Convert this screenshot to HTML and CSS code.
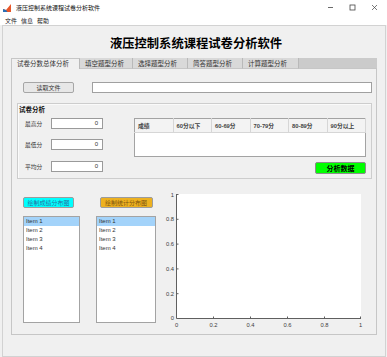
FILE: index.html
```html
<!DOCTYPE html>
<html lang="zh-CN">
<head>
    <meta charset="UTF-8">
    <title>液压控制系统课程试卷分析软件</title>
    <link rel="stylesheet" href="styles.css">
</head>
<body>
<div class="window">
    <div class="titlebar">
        <svg class="app-icon" viewBox="0 0 8 8">
            <rect width="8" height="8" fill="#fff"/>
            <path d="M0 8 L0 5 L3 6 L8 0 L8 8Z" fill="#e8572a"/>
            <path d="M0 8 L0 5 L3 6 L4.5 8Z" fill="#2a6fb5"/>
        </svg>
        <span class="title-text">液压控制系统课程试卷分析软件</span>
        <div class="controls">
            <span class="ctl"><svg viewBox="0 0 7 7"><path d="M1 3.5 H6" stroke="#444" stroke-width="0.8"/></svg></span>
            <span class="ctl"><svg viewBox="0 0 7 7"><rect x="1" y="1" width="5" height="5" fill="none" stroke="#444" stroke-width="0.8"/></svg></span>
            <span class="ctl"><svg viewBox="0 0 7 7"><path d="M1 1 L6 6 M6 1 L1 6" stroke="#444" stroke-width="0.7"/></svg></span>
        </div>
    </div>
    <div class="menubar">
        <span>文件</span><span>信息</span><span>帮助</span>
    </div>
    <div class="client">
        <h1 class="heading">液压控制系统课程试卷分析软件</h1>
        <div class="tabgroup">
            <div class="tabs">
                <div class="tab active">试卷分数总体分析</div>
                <div class="tab">填空题型分析</div>
                <div class="tab">选择题型分析</div>
                <div class="tab">简答题型分析</div>
                <div class="tab">计算题型分析</div>
                <div class="tab-fill"></div>
            </div>
            <div class="tabpanel">
                <div class="file-row">
                    <button class="btn btn-read">读取文件</button>
                    <div class="path-field"></div>
                </div>

                <div class="group">
                    <div class="group-title">试卷分析</div>
                    <div class="group-body">
                        <div class="stats">
                            <div class="stat"><span class="stat-label">最高分</span><div class="num-field">0</div></div>
                            <div class="stat"><span class="stat-label">最低分</span><div class="num-field">0</div></div>
                            <div class="stat"><span class="stat-label">平均分</span><div class="num-field">0</div></div>
                        </div>
                        <div class="result">
                            <table class="score-table">
                                <thead>
                                    <tr><th>成绩</th><th>60分以下</th><th>60-69分</th><th>70-79分</th><th>80-89分</th><th>90分以上</th></tr>
                                </thead>
                                <tbody>
                                    <tr><td colspan="6"></td></tr>
                                </tbody>
                            </table>
                            <button class="btn btn-analyze">分析数据</button>
                        </div>
                    </div>
                </div>

                <div class="plots">
                    <div class="plot-col col-score">
                        <button class="btn btn-cyan">绘制成绩分布图</button>
                        <ul class="listbox">
                            <li class="selected">Item 1</li>
                            <li>Item 2</li>
                            <li>Item 3</li>
                            <li>Item 4</li>
                        </ul>
                    </div>
                    <div class="plot-col col-stat">
                        <button class="btn btn-orange">绘制统计分布图</button>
                        <ul class="listbox">
                            <li class="selected">Item 1</li>
                            <li>Item 2</li>
                            <li>Item 3</li>
                            <li>Item 4</li>
                        </ul>
                    </div>
                    <svg class="axes" viewBox="0 0 212 142">
                        <rect x="16" y="5" width="185" height="124" fill="#fff"/>
                        <g stroke="#5f5f5f" stroke-width="1" fill="none">
                            <path d="M16.5 5 V129.5 H201"/>
                            <path d="M16.5 104.7 h2 M16.5 79.9 h2 M16.5 55.1 h2 M16.5 30.3 h2 M16.5 5.5 h2"/>
                            <path d="M53.5 129.5 v-2 M90.5 129.5 v-2 M127.5 129.5 v-2 M164.5 129.5 v-2 M200.5 129.5 v-2"/>
                        </g>
                        <g class="tick-y" text-anchor="end">
                            <text x="14" y="131">0</text>
                            <text x="14" y="106.5">0.2</text>
                            <text x="14" y="81.5">0.4</text>
                            <text x="14" y="57">0.6</text>
                            <text x="14" y="32">0.8</text>
                            <text x="14" y="7.5">1</text>
                        </g>
                        <g class="tick-x" text-anchor="middle">
                            <text x="16.5" y="138">0</text>
                            <text x="53.5" y="138">0.2</text>
                            <text x="90.5" y="138">0.4</text>
                            <text x="127.5" y="138">0.6</text>
                            <text x="164.5" y="138">0.8</text>
                            <text x="200.5" y="138">1</text>
                        </g>
                    </svg>
                </div>
            </div>
        </div>
    </div>
</div>
</body>
</html>
```

FILE: styles.css
```css
*{
    margin: 0;
    padding: 0;
    box-sizing: border-box;
}
body{
    width: 387px;
    height: 357px;
    overflow: hidden;
    background: #f0f0f0;
    font-family: "Liberation Sans", "Noto Sans CJK SC", sans-serif;
    color: #222;
}
.window{
    display: flex;
    flex-direction: column;
    height: 357px;
}

/* title bar + menu */
.titlebar{
    height: 15px;
    background: #fff;
    display: flex;
    align-items: center;
    padding-left: 3px;
}
.app-icon{
    width: 8px;
    height: 8px;
}
.title-text{
    margin-left: 5px;
    font-size: 6px;
    font-family: "Noto Sans CJK SC", sans-serif;
    color: #111;
}
.controls{
    margin-left: auto;
    margin-right: 2px;
    display: flex;
}
.ctl{
    width: 22px;
    height: 15px;
    display: flex;
    align-items: center;
    justify-content: center;
}
.ctl svg{
    width: 7px;
    height: 7px;
}
.menubar{
    height: 10px;
    background: #fff;
    display: flex;
    align-items: center;
    gap: 4px;
    padding-left: 5px;
    font-size: 6px;
    font-family: "Noto Sans CJK SC", sans-serif;
    color: #222;
}

/* client area */
.client{
    flex: 1;
    margin: 0 1px 0 2px;
    border: 1px solid #d2d2d2;
    background: #f0f0f0;
}
.heading{
    margin-top: 9px;
    padding-left: 4px;
    text-align: center;
    font-family: "Noto Sans CJK SC", sans-serif;
    font-size: 12.3px;
    font-weight: bold;
    line-height: 16px;
    color: #000;
}

/* tabs */
.tabgroup{
    margin: 7px 0 0 8px;
    width: 366px;
    height: 277px;
    display: flex;
    flex-direction: column;
}
.tabs{
    height: 11px;
    display: flex;
}
.tab{
    height: 11px;
    line-height: 10px;
    padding-left: 5px;
    font-size: 6.5px;
    font-family: "Noto Sans CJK SC", sans-serif;
    color: #333;
    background: #d9d9d9;
    border-right: 1px solid #b9b9b9;
    border-bottom: 1px solid #c6c6c6;
    white-space: nowrap;
}
.tab:nth-child(1){ width: 69px; }
.tab:nth-child(2){ width: 53px; }
.tab:nth-child(3){ width: 55px; }
.tab:nth-child(4){ width: 55px; }
.tab:nth-child(5){ width: 56px; }
.tab.active{
    background: #f0f0f0;
    border-left: 1px solid #c6c6c6;
    border-top: 1px solid #c6c6c6;
    border-bottom: none;
    line-height: 9px;
}
.tab-fill{
    flex: 1;
    background: #cbcbcb;
    border-bottom: 1px solid #c6c6c6;
}
.tabpanel{
    flex: 1;
    border: 1px solid #c6c6c6;
    border-top: none;
    background: #f0f0f0;
}

/* file row */
.file-row{
    display: flex;
    margin: 13px 0 0 11px;
}
.btn{
    font-family: "Noto Sans CJK SC", sans-serif;
    border: 1px solid #a6a6a6;
    border-radius: 2px;
    display: flex;
    align-items: center;
    justify-content: center;
}
.btn-read{
    width: 51px;
    height: 11px;
    background: #e7e7e7;
    font-size: 6px;
    color: #333;
}
.path-field{
    margin-left: 18px;
    width: 280px;
    height: 11px;
    background: #fff;
    border: 1px solid #a0a0a0;
}

/* 试卷分析 panel */
.group{
    margin: 10px 0 0 5px;
    width: 355px;
    height: 76px;
    border: 1px solid #cdcdcd;
    box-shadow: inset 1px 1px #fafafa;
}
.group-title{
    height: 10px;
    line-height: 10px;
    padding-left: 1px;
    font-size: 6.5px;
    font-weight: bold;
    font-family: "Noto Sans CJK SC", sans-serif;
    color: #111;
}
.group-body{
    display: flex;
    margin-top: 4px;
}
.stats{
    display: flex;
    flex-direction: column;
    gap: 10px;
    padding-left: 7px;
}
.stat{
    display: flex;
    align-items: center;
}
.stat:last-child{
    margin-top: 1px;
}
.stat-label{
    width: 26px;
    font-size: 5.8px;
    font-family: "Noto Sans CJK SC", sans-serif;
    color: #333;
}
.num-field{
    width: 52px;
    height: 11px;
    background: #fff;
    border: 1px solid #9a9a9a;
    font-size: 6px;
    line-height: 9px;
    text-align: right;
    padding-right: 4px;
    color: #333;
}
.result{
    margin-left: 31px;
    width: 232px;
    display: flex;
    flex-direction: column;
}
.score-table{
    width: 232px;
    border-collapse: collapse;
    border: 1px solid #a3a3a3;
    table-layout: fixed;
}
.score-table th{
    height: 14px;
    background: #f3f3f3;
    border-right: 1px solid #d6d6d6;
    border-bottom: 1px solid #d6d6d6;
    font-size: 5.8px;
    font-weight: bold;
    text-align: left;
    padding-left: 3px;
    color: #444;
    white-space: nowrap;
}
.score-table td{
    height: 24px;
    background: #fff;
}
.btn-analyze{
    align-self: flex-end;
    margin-top: 5px;
    width: 51px;
    height: 12px;
    background: #00ff00;
    border-color: #8c8c8c;
    font-size: 7px;
    font-weight: bold;
    color: #000;
}

/* lower plot area */
.plots{
    display: flex;
    margin-top: 10px;
}
.plot-col{
    display: flex;
    flex-direction: column;
    padding-top: 8px;
}
.col-score{
    margin-left: 11px;
    width: 57px;
}
.col-stat{
    margin-left: 16px;
    width: 60px;
    align-items: center;
}
.btn-cyan,
.btn-orange{
    height: 11px;
    font-size: 6px;
    border-color: #9c9c9c;
}
.btn-cyan{
    width: 51px;
    background: #00ffff;
    color: #2b6f9e;
}
.btn-orange{
    width: 53px;
    background: #edb120;
    color: #7d5410;
}
.listbox{
    list-style: none;
    margin-top: 8px;
    width: 100%;
    height: 107px;
    background: #fff;
    border: 1px solid #a3a3a3;
}
.listbox li{
    height: 9px;
    line-height: 9px;
    padding-left: 2px;
    font-size: 6px;
    color: #333;
}
.listbox li.selected{
    background: #a3d3fa;
}
.axes{
    margin-left: 4px;
    width: 212px;
    height: 142px;
}
.axes text{
    font-family: "Liberation Sans", sans-serif;
    font-size: 5.8px;
    fill: #404040;
}
```
